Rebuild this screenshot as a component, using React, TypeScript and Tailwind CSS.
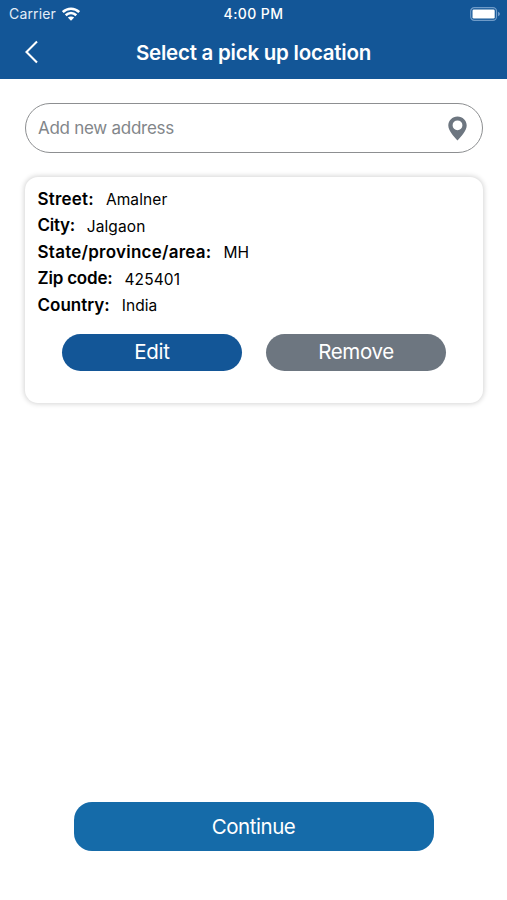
const fields = [
  { label: 'Street:', value: 'Amalner', spacing: 'tracking-[0.2px]' },
  { label: 'City:', value: 'Jalgaon', spacing: 'tracking-[-0.3px]' },
  { label: 'State/province/area:', value: 'MH', spacing: 'tracking-[0.25px]' },
  { label: 'Zip code:', value: '425401', spacing: 'tracking-[-0.2px]' },
  { label: 'Country:', value: 'India', spacing: 'tracking-normal' },
];

function WifiIcon() {
  return (
    <svg className="h-[14px] w-[18px]" viewBox="0 0 18 14" fill="none" stroke="white" strokeWidth="2.6">
      <path d="M0.8 5C5.5 0.6 12.5 0.6 17.2 5" />
      <path d="M3.7 8.3C6.9 5.4 11.1 5.4 14.3 8.3" />
      <path d="M9 13.8L5.8 10.6C7.6 9 10.4 9 12.2 10.6Z" fill="white" stroke="none" />
    </svg>
  );
}

function BatteryIcon() {
  return (
    <svg className="h-[14px] w-[31px]" viewBox="0 0 31 14">
      <rect x="0.7" y="0.7" width="25.8" height="12.6" rx="3.6" fill="none" stroke="#6f9bc8" strokeWidth="1.2" />
      <rect x="2.5" y="2.4" width="22.2" height="9.2" rx="1.3" fill="white" />
      <path d="M28 4.8C30.6 5.8 30.6 8.2 28 9.2Z" fill="#6f9bc8" />
    </svg>
  );
}

function StatusBar() {
  return (
    <div className="grid h-[27px] grid-cols-3 items-center px-[6px] text-[14px] leading-none text-white">
      <div className="flex items-center gap-[6px] pl-[3px]">
        <span className="tracking-[0.15px] text-[#e3edf7]">Carrier</span>
        <WifiIcon />
      </div>
      <span className="pt-px text-center text-[14px] font-medium tracking-[0.4px]">4:00 PM</span>
      <div className="flex justify-end">
        <BatteryIcon />
      </div>
    </div>
  );
}

export default function App() {
  return (
    <main className="flex h-[900px] w-[507px] flex-col bg-white font-['Inter',sans-serif]">
      <header className="h-[79px] bg-[#135697]">
        <StatusBar />
        <div className="grid h-[50px] grid-cols-[60px_1fr_60px] items-center">
          <button aria-label="Back" className="pl-[24px]">
            <svg className="h-[24px] w-[15px]" viewBox="0 0 15 24" fill="none" stroke="white" strokeWidth="2.1">
              <path d="M13 1.5L2.5 12L13 22.5" />
            </svg>
          </button>
          <h1 className="whitespace-nowrap pt-[2px] text-center text-[20.5px] font-semibold leading-none tracking-[-0.24px] text-white">
            Select a pick up location
          </h1>
        </div>
      </header>

      <section className="px-[25px] pt-[24px]">
        <div className="flex h-[50px] w-[458px] items-center justify-between rounded-full border-[1.5px] border-[#8d8f91] pl-[12px] pr-[15px]">
          <span className="pt-[2px] text-[17px] tracking-[-0.27px] text-[#82868a]">Add new address</span>
          <svg className="h-[25px] w-[19px]" viewBox="0 0 19 25" fill="#6d7680" fillRule="evenodd">
            <path d="M9.5 0.4C4.3 0.4 0.3 4.4 0.3 9.4C0.3 15 6 20.2 9.5 24.6C13 20.2 18.7 15 18.7 9.4C18.7 4.4 14.7 0.4 9.5 0.4ZM9.5 4.4A4.9 4.9 0 1 1 9.5 14.2A4.9 4.9 0 1 1 9.5 4.4Z" />
          </svg>
        </div>

        <article className="mt-[24px] h-[226px] w-[458px] rounded-[13px] bg-white px-[12.5px] pt-[9px] shadow-[0_0_5px_1px_rgba(0,0,0,0.17)]">
          <dl>
            {fields.map((field) => (
              <div key={field.label} className="flex h-[26.5px] items-center gap-[12px] text-black">
                <dt className={`text-[17px] font-semibold ${field.spacing}`}>{field.label}</dt>
                <dd className="pt-px text-[15.5px] tracking-[0.1px]">{field.value}</dd>
              </div>
            ))}
          </dl>
          <div className="mt-[15px] flex gap-[24px] pl-[24.5px] text-[20.5px] text-white">
            <button className="h-[37px] w-[180px] rounded-full bg-[#135697] pt-px tracking-[-0.2px]">Edit</button>
            <button className="h-[37px] w-[180px] rounded-full bg-[#6d7680] pt-px tracking-[-0.4px]">Remove</button>
          </div>
        </article>
      </section>

      <button className="mx-auto mb-[49px] mt-auto h-[49px] w-[360px] rounded-[18px] bg-[#156ba9] pt-[2px] text-[20.5px] tracking-[-0.45px] text-white">
        Continue
      </button>
    </main>
  );
}
